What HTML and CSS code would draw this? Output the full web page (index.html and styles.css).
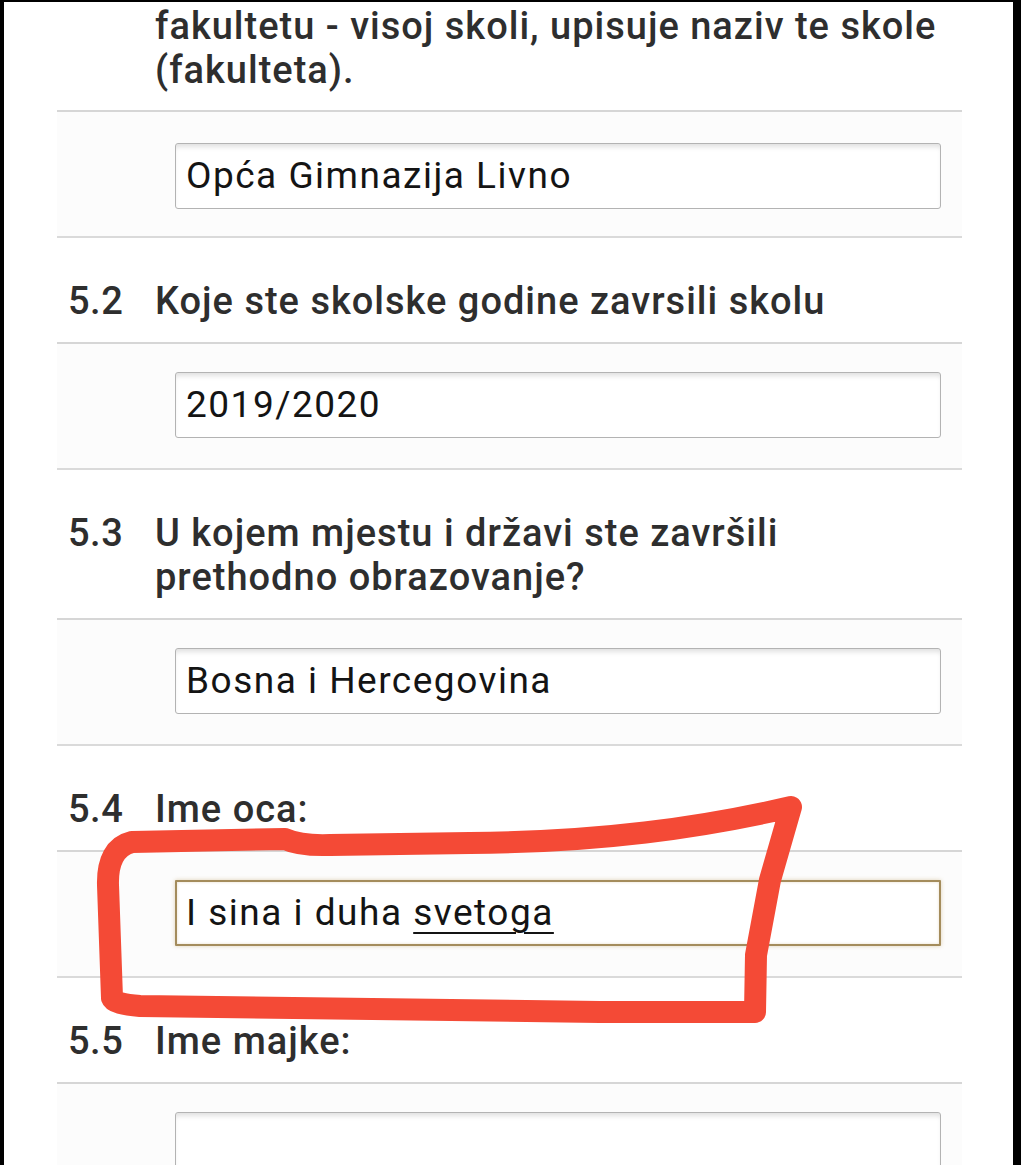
FILE: index.html
```html
<!DOCTYPE html>
<html lang="bs">
<head>
<meta charset="utf-8">
<title>Obrazac</title>
<link rel="stylesheet" href="styles.css">
</head>
<body>
<div class="screen">
  <div class="form">
    <div class="q q-first">
      <span class="num"></span>
      <span class="text">fakultetu - visoj skoli, upisuje naziv te skole<br>(fakulteta).</span>
    </div>
    <div class="a a-first">
      <div class="field">Opća Gimnazija Livno</div>
    </div>
    <div class="q">
      <span class="num">5.2</span>
      <span class="text">Koje ste skolske godine zavrsili skolu</span>
    </div>
    <div class="a">
      <div class="field">2019/2020</div>
    </div>
    <div class="q">
      <span class="num">5.3</span>
      <span class="text">U kojem mjestu i državi ste završili<br>prethodno obrazovanje?</span>
    </div>
    <div class="a">
      <div class="field">Bosna i Hercegovina</div>
    </div>
    <div class="q">
      <span class="num">5.4</span>
      <span class="text">Ime oca:</span>
    </div>
    <div class="a">
      <div class="field field-focus">I sina i duha <span class="compose">svetoga</span></div>
    </div>
    <div class="q">
      <span class="num">5.5</span>
      <span class="text">Ime majke:</span>
    </div>
    <div class="a">
      <div class="field"></div>
    </div>
  </div>
  <svg class="scribble" width="1021" height="1165" viewBox="0 0 1021 1165" aria-hidden="true">
    <path d="M 112 998 L 108 885 Q 107 848 132 842 L 285 839 Q 300 846 330 845 L 470 843 C 600 842 700 828 791 807 Q 780 845 770 880 L 756 955 L 755 1012 L 600 1012 L 140 1006 Q 114 1004 112 998 Z" />
  </svg>
</div>
</body>
</html>
```

FILE: styles.css
```css
html, body {
  margin: 0;
  padding: 0;
  background: #000;
}

.screen {
  position: relative;
  margin: 2px 8px 0 4px;
  height: 1163px;
  overflow: hidden;
  background: #fff;
  font-family: Roboto, "Noto Sans", "Liberation Sans", sans-serif;
}

.form {
  margin-left: 53px;
  width: 905px;
}

.q {
  display: flex;
  padding: 41px 0 19px 11px;
  border-bottom: 2px solid #d6d6d6;
  font-size: 38px;
  font-weight: 500;
  letter-spacing: 1px;
  line-height: 44px;
  color: #2e2e2e;
}

.q-first {
  padding-top: 2px;
  padding-bottom: 18px;
}

.num {
  flex: 0 0 87px;
  letter-spacing: 0.5px;
}

.text {
  flex: 1;
  white-space: nowrap;
}

.a {
  padding: 28px 0 30px 118px;
  border-bottom: 2px solid #dadada;
  background: #fcfcfc;
}

.a-first {
  padding-top: 31px;
  padding-bottom: 27px;
}

.field {
  box-sizing: border-box;
  width: 766px;
  height: 66px;
  padding-left: 10px;
  border: 1px solid #b3b3b3;
  border-radius: 3px;
  background: #fff;
  box-shadow: inset 0 5px 5px -2px rgba(0, 0, 0, 0.12);
  font-size: 37px;
  letter-spacing: 1.5px;
  line-height: 64px;
  color: #141414;
  white-space: nowrap;
}

.field-focus {
  border: 2px solid #a48c5c;
  border-radius: 1px;
  line-height: 62px;
  padding-left: 9px;
  box-shadow: 0 0 4px rgba(190, 160, 100, 0.45), inset 0 0 3px rgba(190, 160, 100, 0.35);
}

.compose {
  text-decoration: underline;
  text-decoration-thickness: 2px;
  text-underline-offset: 7px;
}

.scribble {
  position: absolute;
  left: -4px;
  top: -2px;
  pointer-events: none;
}

.scribble path {
  fill: none;
  stroke: #f44a36;
  stroke-width: 22px;
  stroke-linejoin: round;
  stroke-linecap: round;
}
```
